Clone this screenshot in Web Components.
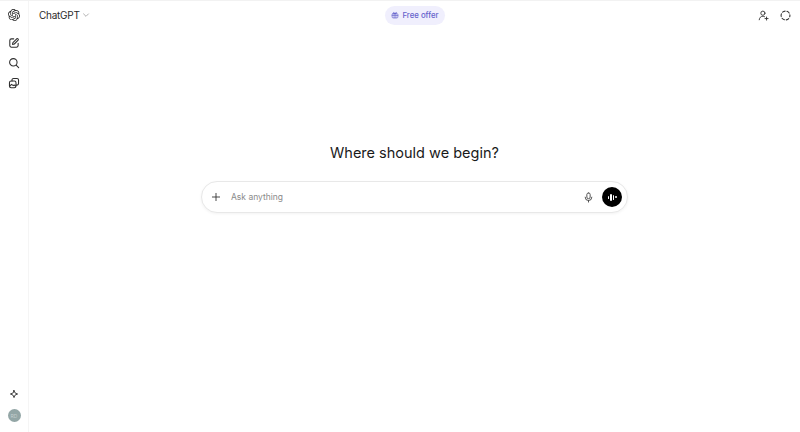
<!DOCTYPE html>
<html lang="en">
<head>
<meta charset="utf-8">
<title>ChatGPT</title>
<style>
    html, body { margin: 0; height: 100%; }
    body { font-family: Inter, "Liberation Sans", sans-serif; color: #0d0d0d; background: #fff; overflow: hidden; }
</style>
</head>
<body>
<chat-app></chat-app>
<script>
    const ICONS = {
        logo: '<path transform="scale(.75)" fill="currentColor" stroke="none" d="M22.282 9.821a5.985 5.985 0 0 0-.516-4.91 6.046 6.046 0 0 0-6.51-2.9A6.065 6.065 0 0 0 4.981 4.18a5.985 5.985 0 0 0-3.998 2.9 6.046 6.046 0 0 0 .743 7.097 5.98 5.98 0 0 0 .51 4.911 6.051 6.051 0 0 0 6.515 2.9A5.985 5.985 0 0 0 13.26 24a6.056 6.056 0 0 0 5.772-4.206 5.99 5.99 0 0 0 3.997-2.9 6.056 6.056 0 0 0-.747-7.073zM13.26 22.43a4.476 4.476 0 0 1-2.876-1.04l.141-.081 4.779-2.758a.795.795 0 0 0 .392-.681v-6.737l2.02 1.168a.071.071 0 0 1 .038.052v5.583a4.504 4.504 0 0 1-4.494 4.494zM3.6 18.304a4.47 4.47 0 0 1-.535-3.014l.142.085 4.783 2.759a.771.771 0 0 0 .78 0l5.843-3.369v2.332a.08.08 0 0 1-.033.062L9.74 19.95a4.5 4.5 0 0 1-6.14-1.646zM2.34 7.896a4.485 4.485 0 0 1 2.366-1.973V11.6a.766.766 0 0 0 .388.676l5.815 3.355-2.02 1.168a.076.076 0 0 1-.071 0l-4.83-2.786A4.504 4.504 0 0 1 2.34 7.872zm16.597 3.855l-5.833-3.387L15.119 7.2a.076.076 0 0 1 .071 0l4.83 2.791a4.494 4.494 0 0 1-.676 8.105v-5.678a.79.79 0 0 0-.407-.667zm2.01-3.023l-.141-.085-4.774-2.782a.776.776 0 0 0-.785 0L9.409 9.23V6.897a.066.066 0 0 1 .028-.061l4.83-2.787a4.5 4.5 0 0 1 6.68 4.66zm-12.64 4.135l-2.02-1.164a.08.08 0 0 1-.038-.057V6.075a4.5 4.5 0 0 1 7.375-3.453l-.142.08L8.704 5.46a.795.795 0 0 0-.393.681zm1.097-2.365l2.602-1.5 2.607 1.5v2.999l-2.597 1.5-2.607-1.5Z"/>',
        edit: '<path d="M8.600 2.800H5.200a2.500 2.500 0 0 0-2.500 2.500v7.500a2.500 2.500 0 0 0 2.500 2.500h7.500a2.500 2.500 0 0 0 2.500-2.500V9.400"/><path d="M6.800 11.200l.6-2.800 5.700-5.700a1.500 1.500 0 0 1 2.100 2.100l-5.700 5.700z"/>',
        search: '<circle cx="8" cy="8" r="5.600"/><path d="M12.200 12.200l3.800 3.800"/>',
        library: '<rect x="2.200" y="6" width="9.800" height="10" rx="2.500"/><path d="M6 6V4.500a2.300 2.300 0 0 1 2.300-2.300h5.200a2.300 2.300 0 0 1 2.300 2.300v5.400a2.300 2.300 0 0 1-2.300 2.300H12"/><path d="M2.500 13.500l2.900-2.500 2.500 2 1.300-1 2.300 1.800"/>',
        spark: '<path d="M9 2.500l1.900 4.600 4.600 1.900-4.600 1.900L9 15.500l-1.900-4.600L2.500 9l4.600-1.900z"/>',
        chevron: '<path d="M3.500 6.500l5.500 5.500 5.500-5.500"/>',
        gift: '<rect x="2.500" y="6" width="13" height="9.500" rx="2"/><path d="M2.500 10h13M7 6v9.500M11 6v9.500M9 6C7 6 5.500 5.300 5.500 4S8 2.500 9 6zM9 6c2 0 3.500-.7 3.500-2S10 2.500 9 6z"/>',
        person: '<circle cx="8" cy="5.200" r="3.400"/><path d="M2 16c.3-3.500 2.600-5.700 6-5.700 1 0 1.900.2 2.700.6"/><path d="M14 11.500v5M11.500 14h5"/>',
        ring: '<circle cx="9" cy="9" r="7.200" stroke-width="1.800" stroke-dasharray="4.400 3.140" stroke-dashoffset="2.200"/>',
        plus: '<path d="M9 2.500v13M2.500 9h13"/>',
        mic: '<rect x="6.300" y="1.500" width="5.400" height="9.500" rx="2.700"/><path d="M3.500 8.500a5.500 5.500 0 0 0 11 0M9 14v2.500"/>'
    };

    class AppIcon extends HTMLElement {
        connectedCallback() {
            const size = this.getAttribute('size') || 16;
            const width = this.getAttribute('stroke') || 1.4;
            this.attachShadow({mode: 'open'}).innerHTML = `
                <style>
                    :host { display: inline-flex; flex: none; }
                    svg { display: block; fill: none; stroke: currentColor; stroke-linecap: round; stroke-linejoin: round; }
                </style>
                <svg width="${size}" height="${size}" viewBox="0 0 18 18" stroke-width="${width}">${ICONS[this.getAttribute('name')]}</svg>`;
        }
    }

    class SideBar extends HTMLElement {
        constructor() {
            super();
            this.attachShadow({mode: 'open'}).innerHTML = `
                <style>
                    :host { display: flex; flex-direction: column; align-items: center; width: 29px; flex: none; box-sizing: border-box; border-right: 1px solid #f5f5f5; color: #2f2f2f; padding: 8px 0 10px; }
                    .logo { margin-bottom: 16px; color: #222; }
                    .tools { display: flex; flex-direction: column; gap: 8px; }
                    .foot { margin-top: auto; display: flex; flex-direction: column; align-items: center; gap: 10px; }
                    .avatar { width: 13px; height: 13px; border-radius: 50%; background: #93a6a6; color: #c3cfcf; font-size: 5px; display: flex; align-items: center; justify-content: center; }
                </style>
                <app-icon class="logo" name="logo" size="12"></app-icon>
                <div class="tools">
                    <app-icon name="edit" size="12" stroke="1.600"></app-icon>
                    <app-icon name="search" size="12" stroke="1.600"></app-icon>
                    <app-icon name="library" size="12" stroke="1.600"></app-icon>
                </div>
                <div class="foot">
                    <app-icon name="spark" size="10" stroke="1.600"></app-icon>
                    <div class="avatar">RD</div>
                </div>`;
        }
    }

    class TopBar extends HTMLElement {
        constructor() {
            super();
            this.attachShadow({mode: 'open'}).innerHTML = `
                <style>
                    :host { display: grid; grid-template-columns: 1fr auto 1fr; align-items: center; height: 28px; padding: 0 9px 0 10px; }
                    .model { display: flex; align-items: center; gap: 2px; font-size: 10px; letter-spacing: -.25px; color: #2b2b2b; }
                    .model app-icon { color: #8a8a8a; }
                    .offer { display: flex; align-items: center; gap: 3px; height: 19px; padding: 0 6px; border-radius: 10px; background: #f0effd; color: #6562cc; font-size: 7.800px; font-weight: 500; }
                    .actions { display: flex; justify-content: flex-end; gap: 11px; color: #333; }
                </style>
                <div class="model">ChatGPT <app-icon name="chevron" size="8" stroke="1.500"></app-icon></div>
                <div class="offer"><app-icon name="gift" size="8" stroke="1.500"></app-icon>Free offer</div>
                <div class="actions">
                    <app-icon name="person" size="11" stroke="1.500"></app-icon>
                    <app-icon name="ring" size="11" stroke="1.500"></app-icon>
                </div>`;
        }
    }

    class ComposerBox extends HTMLElement {
        constructor() {
            super();
            this.attachShadow({mode: 'open'}).innerHTML = `
                <style>
                    :host { display: flex; align-items: center; box-sizing: border-box; width: 427px; height: 32px; padding: 0 5px 0 10px; border: 1px solid #e8e8e8; border-radius: 16px; box-shadow: 0 1px 3px rgba(0,0,0,.05); background: #fff; }
                    .plus { color: #333; margin: 0 10px 0 -1px; }
                    .hint { flex: 1; font-size: 8.500px; color: #8a8a8a; }
                    .mic { color: #444; margin-right: 8px; }
                    .voice { width: 20px; height: 20px; border-radius: 50%; background: #000; display: flex; align-items: center; justify-content: center; gap: 1px; }
                    .voice i { display: block; width: 1.500px; background: #fff; border-radius: 1px; }
                </style>
                <app-icon class="plus" name="plus" size="10" stroke="1.600"></app-icon>
                <span class="hint">Ask anything</span>
                <app-icon class="mic" name="mic" size="11" stroke="1.500"></app-icon>
                <div class="voice">
                    <i style="height:3px"></i><i style="height:7px"></i><i style="height:5px"></i><i style="height:2px"></i>
                </div>`;
        }
    }

    class ChatApp extends HTMLElement {
        constructor() {
            super();
            this.attachShadow({mode: 'open'}).innerHTML = `
                <style>
                    :host { display: flex; height: 432px; box-sizing: border-box; border-top: 1px solid #f2f2f2; }
                    main { flex: 1; display: flex; flex-direction: column; min-width: 0; }
                    .center { display: flex; flex-direction: column; align-items: center; padding-top: 115px; }
                    h1 { margin: 0 0 19px; font-size: 14.500px; line-height: 18px; font-weight: 400; color: #1a1a1a; }
                </style>
                <side-bar></side-bar>
                <main>
                    <top-bar></top-bar>
                    <div class="center">
                        <h1>Where should we begin?</h1>
                        <composer-box></composer-box>
                    </div>
                </main>`;
        }
    }

    customElements.define('app-icon', AppIcon);
    customElements.define('side-bar', SideBar);
    customElements.define('top-bar', TopBar);
    customElements.define('composer-box', ComposerBox);
    customElements.define('chat-app', ChatApp);
</script>
</body>
</html>
